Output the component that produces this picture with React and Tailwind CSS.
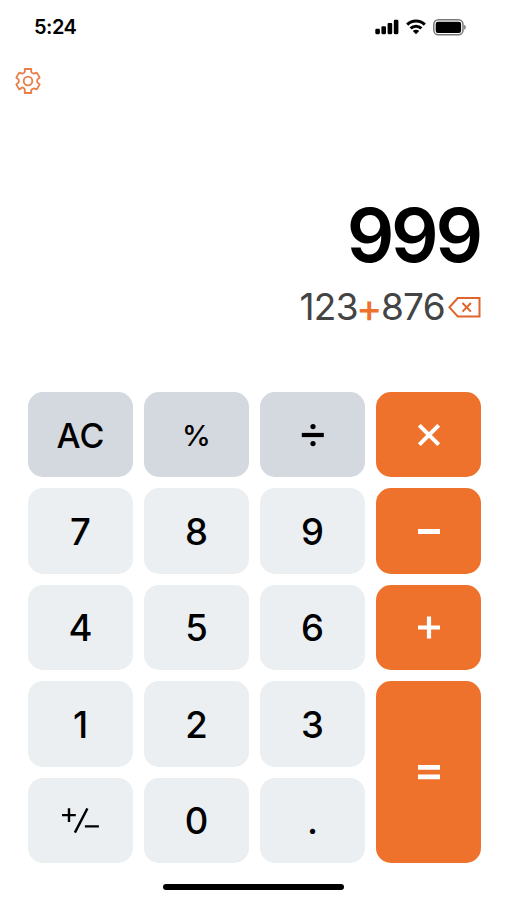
import { useState } from 'react';
import clsx from 'clsx';

const toneClasses = {
  number: 'bg-[#ebeff2] text-black',
  utility: 'bg-[#d4d8df] text-black',
  operator: 'bg-[#ee722c] text-white',
};

// ── Icons ────────────────────────────────────────────────────────────────────
function SignalIcon() {
  return (
    <svg width="24" height="16" viewBox="0 0 24 16" fill="currentColor" aria-hidden="true">
      <rect x="0.3" y="9.8" width="4.6" height="5.4" rx="1.1" />
      <rect x="6.4" y="7.3" width="4.6" height="7.9" rx="1.1" />
      <rect x="12.6" y="4" width="4.6" height="11.2" rx="1.1" />
      <rect x="18.8" y="0.8" width="4.6" height="14.4" rx="1.1" />
    </svg>
  );
}

function WifiIcon() {
  return (
    <svg width="20" height="16" viewBox="0 0 20 16" aria-hidden="true">
      <g fill="none" stroke="currentColor" strokeWidth="3">
        <path d="M1.2 5.6a12.6 12.6 0 0 1 17.6 0" />
        <path d="M4.6 9.4a7.7 7.7 0 0 1 10.8 0" />
      </g>
      <path d="M10 15.2l-3.2-3.2a4.6 4.6 0 0 1 6.4 0z" fill="currentColor" />
    </svg>
  );
}

function BatteryIcon() {
  return (
    <svg width="34" height="17" viewBox="0 0 34 17" aria-hidden="true">
      <rect x="0.8" y="0.8" width="29.2" height="15" rx="4.6" fill="none" stroke="#777" strokeWidth="1.5" />
      <rect x="2.7" y="2.7" width="25.4" height="11.2" rx="2.2" fill="currentColor" />
      <path d="M31.3 5.8c1.8.7 1.8 4.3 0 5z" fill="#555" />
    </svg>
  );
}

function GearIcon() {
  return (
    <svg width="26" height="26" viewBox="0 0 26 26" fill="none" stroke="#ea7c45" strokeWidth="1.8" strokeLinejoin="round" aria-hidden="true">
      <path d="M9.8 1h6.4v2.8q.8 1.6 2.7 1.8L21.8 4.6l2.9 5-2.2 1.8q-.8 1.6 0 3.2l2.2 1.8-2.9 5-2.9-1q-1.9.2-2.7 1.8V25H9.8v-3.8q-.8-1.6-2.7-1.8l-2.9 2-2.9-5 2.2-1.8q.8-1.6 0-3.2L1.3 9.6l2.9-5 2.9 1q1.9-.2 2.7-1.8z" />
      <circle cx="13" cy="13" r="4.3" />
    </svg>
  );
}

function BackspaceIcon() {
  return (
    <svg width="33" height="21" viewBox="0 0 33 21" fill="none" stroke="#e0642b" aria-hidden="true">
      <path d="M9.8 1.1H31.5v18.4H9.8L1.4 10.3z" strokeWidth="2" />
      <path d="M14.5 6l8.4 8.6M22.9 6l-8.4 8.6" strokeWidth="2" />
    </svg>
  );
}

function OperatorIcon({ d, strokeWidth = 4.6 }) {
  return (
    <svg width="24" height="24" viewBox="0 0 24 24" fill="none" stroke="currentColor" strokeWidth={strokeWidth} aria-hidden="true">
      <path d={d} />
    </svg>
  );
}

function DivideIcon() {
  return (
    <svg width="24" height="24" viewBox="0 0 24 24" fill="currentColor" aria-hidden="true">
      <rect x="0.8" y="8.9" width="22" height="4.2" />
      <circle cx="12" cy="2.6" r="2.6" />
      <circle cx="12" cy="19.6" r="2.6" />
    </svg>
  );
}

function SignIcon() {
  return (
    <svg width="38" height="26" viewBox="0 0 38 26" fill="none" stroke="currentColor" strokeWidth="2.4" aria-hidden="true">
      <path d="M0 7.1h13.8M7 0.2v13.8M12.9 24.6L25.4 0.4M22.9 18.4h14" />
    </svg>
  );
}

const keys = [
  { id: 'AC', tone: 'utility', size: 'text-[34px]' },
  { id: '%', tone: 'utility', size: 'text-[29px]' },
  { id: '/', tone: 'utility', label: <DivideIcon /> },
  { id: '*', tone: 'operator', label: <OperatorIcon d="M2.3 1.3l19.4 19.4M21.7 1.3L2.3 20.7" strokeWidth={4} /> },
  { id: '7' },
  { id: '8' },
  { id: '9' },
  { id: '-', tone: 'operator', label: <OperatorIcon d="M1 11.5h22" strokeWidth={5} /> },
  { id: '4' },
  { id: '5' },
  { id: '6' },
  { id: '+', tone: 'operator', label: <OperatorIcon d="M1 11.5h22M12 0.5v22" strokeWidth={4.2} /> },
  { id: '1' },
  { id: '2' },
  { id: '3' },
  { id: '=', tone: 'operator', tall: true, label: <OperatorIcon d="M1 6.3h22M1 15.8h22" strokeWidth={4.8} /> },
  { id: '+/-', label: <SignIcon /> },
  { id: '0' },
  { id: '.' },
];

function Key({ id, tone = 'number', size = 'text-[36.5px]', label, tall, onPress }) {
  return (
    <button
      type="button"
      aria-label={id}
      onClick={() => onPress(id)}
      className={clsx('flex items-center justify-center rounded-[15px] pt-[2px] leading-none font-medium', toneClasses[tone], size, tall && 'row-span-2')}
    >
      {label || id}
    </button>
  );
}

function compute(left, op, right) {
  const a = Number(left);
  const b = Number(right);
  if (!op || right === '') return a;
  if (op === '+') return a + b;
  if (op === '-') return a - b;
  if (op === '*') return a * b;
  return b === 0 ? 0 : a / b;
}

export default function App() {
  const [calc, setCalc] = useState({ left: '123', op: '+', right: '876' });
  const active = calc.op ? 'right' : 'left';

  const backspace = () => {
    if (calc.op && calc.right === '') setCalc({ ...calc, op: '' });
    else setCalc({ ...calc, [active]: calc[active].slice(0, -1) });
  };

  const press = (id) => {
    if (id === 'AC') setCalc({ left: '', op: '', right: '' });
    else if (id === '=') setCalc({ left: String(compute(calc.left, calc.op, calc.right)), op: '', right: '' });
    else if (id === '%') setCalc({ ...calc, [active]: String(Number(calc[active]) / 100) });
    else if (id === '+/-') setCalc({ ...calc, [active]: String(-Number(calc[active])) });
    else if ('+-*/'.includes(id)) setCalc({ left: String(compute(calc.left, calc.op, calc.right)), op: id, right: '' });
    else if (id !== '.' || !calc[active].includes('.')) setCalc({ ...calc, [active]: calc[active] + id });
  };

  return (
    <div className="flex h-[900px] w-[507px] flex-col overflow-hidden bg-white font-['Inter',sans-serif] text-black">
      <header className="flex h-[54px] items-center justify-between pr-[40px] pl-[34px]">
        <span className="text-[20px] leading-none font-semibold tracking-[-0.5px]">5:24</span>
        <div className="flex items-center gap-[7px]">
          <SignalIcon />
          <WifiIcon />
          <BatteryIcon />
        </div>
      </header>

      <div className="flex h-[54px] items-center pl-[15px]">
        <button type="button" aria-label="Settings"><GearIcon /></button>
      </div>

      <section className="flex h-[284px] flex-col items-end pt-[91px] pr-[26px]">
        <div className="mr-px text-[74.5px] leading-[72px] font-[570] tracking-[-3.2px]">{compute(calc.left, calc.op, calc.right)}</div>
        <div className="mt-[14px] flex items-center text-[37px] leading-[44px] text-[#444]">
          <span className="tracking-[-0.7px]">{calc.left}</span>
          <span className="mx-[-1.5px] translate-y-px text-[39px] font-medium text-[#ee722c]">{calc.op}</span>
          <span className="tracking-[-0.7px]">{calc.right}</span>
          <button type="button" aria-label="Backspace" onClick={backspace} className="ml-[3px]"><BackspaceIcon /></button>
        </div>
      </section>

      <main className="ml-7 grid h-[471px] w-[453px] grid-cols-4 grid-rows-5 gap-[11px]">
        {keys.map((k) => (
          <Key key={k.id} {...k} onPress={press} />
        ))}
      </main>

      <div className="mx-auto mt-[21px] h-[6px] w-[181px] rounded-full bg-black" />
    </div>
  );
}
